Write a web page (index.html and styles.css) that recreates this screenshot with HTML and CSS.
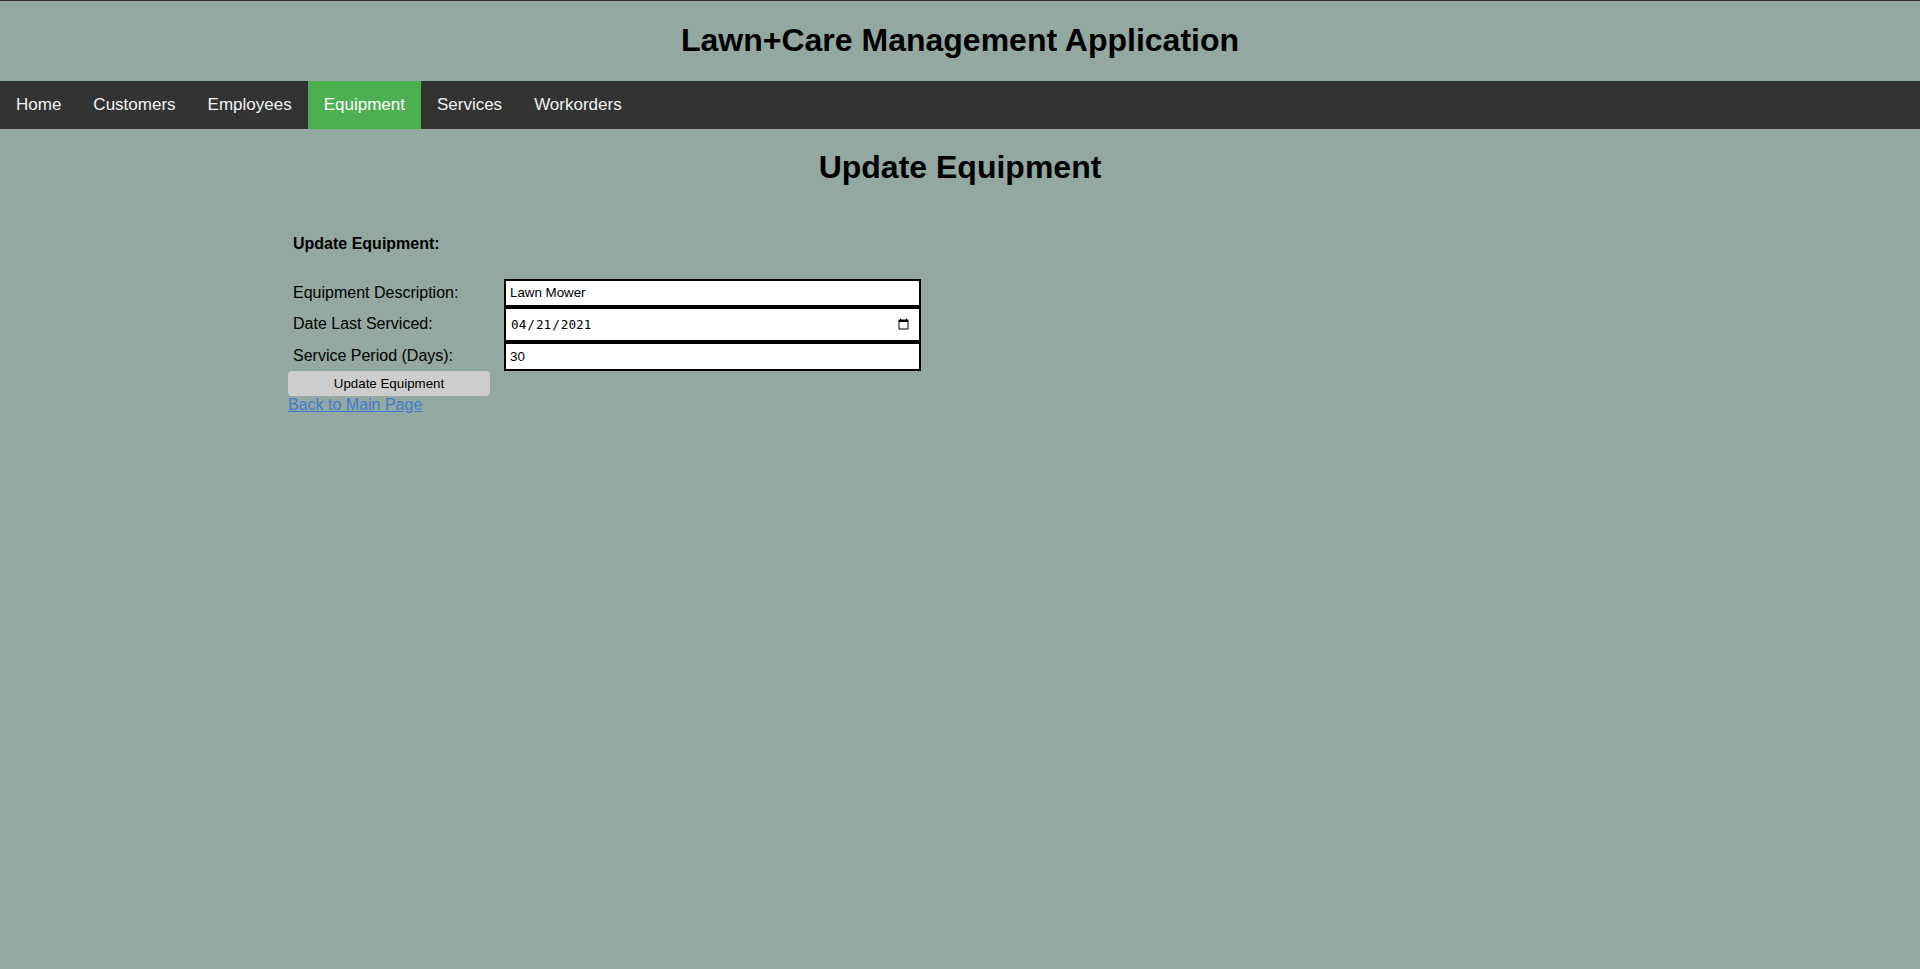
FILE: index.html
```html
<!DOCTYPE html>
<html lang="en">
<head>
<meta charset="utf-8">
<title>Update Equipment</title>
<link rel="stylesheet" href="styles.css">
</head>
<body>
<header class="site-header">
  <h1 class="site-title">Lawn+Care Management Application</h1>
</header>
<nav class="topnav">
  <a class="nav-link" href="#">Home</a>
  <a class="nav-link" href="#">Customers</a>
  <a class="nav-link" href="#">Employees</a>
  <a class="nav-link active" href="#">Equipment</a>
  <a class="nav-link" href="#">Services</a>
  <a class="nav-link" href="#">Workorders</a>
</nav>
<main class="page">
  <h1 class="page-title">Update Equipment</h1>
  <div class="content">
    <form class="equip-form" onsubmit="return false;">
      <p class="form-title">Update Equipment:</p>
      <div class="form-grid">
        <label class="field-label" for="desc">Equipment Description:</label>
        <input class="field field-text" id="desc" type="text" value="Lawn Mower">
        <label class="field-label" for="date">Date Last Serviced:</label>
        <input class="field field-date" id="date" type="date" value="2021-04-21">
        <label class="field-label" for="period">Service Period (Days):</label>
        <input class="field field-number" id="period" type="number" value="30">
      </div>
      <button class="submit-btn" type="submit">Update Equipment</button>
    </form>
    <a class="back-link" href="#">Back to Main Page</a>
  </div>
</main>
</body>
</html>
```

FILE: styles.css
```css
html, body {
  margin: 0;
  padding: 0;
}

body {
  background-color: #93a8a1;
  border-top: 1px solid #2e2e2e;
  font-family: "Liberation Sans", Arial, sans-serif;
  color: #000;
  overflow: hidden;
}

.site-title {
  margin: 21.44px 0;
  font-size: 32px;
  font-weight: bold;
  text-align: center;
}

.topnav {
  display: flex;
  background-color: #333;
  height: 48px;
}

.nav-link {
  display: block;
  color: #f2f2f2;
  text-decoration: none;
  font-size: 17px;
  padding: 14px 16px;
  line-height: 20px;
}

.nav-link.active {
  background-color: #4caf50;
  color: #fff;
}

.page-title {
  margin: 20px 0 21.44px;
  font-size: 32px;
  font-weight: bold;
  text-align: center;
}

.content {
  margin: 0 15%;
}

.form-title {
  margin: 49px 0 26px;
  padding-left: 5px;
  font-size: 16px;
  font-weight: bold;
  line-height: 18px;
}

.form-grid {
  display: grid;
  grid-template-columns: 216px 417px;
  align-items: center;
}

.field-label {
  padding-left: 5px;
  font-size: 16px;
}

.field {
  box-sizing: border-box;
  width: 417px;
  margin: 0;
  padding: 0 4px;
  border: 2px solid #000;
  border-radius: 0;
  background: #fff;
  color: #000;
  font-family: "Liberation Sans", Arial, sans-serif;
  font-size: 13.33px;
  outline: none;
}

.field-text {
  height: 28px;
}

.field-date {
  height: 35px;
  padding-right: 7px;
  font-family: "DejaVu Sans Mono", "Liberation Mono", monospace;
  font-size: 12.7px;
}

.field-number {
  height: 29px;
}

.submit-btn {
  display: block;
  width: 202px;
  height: 25px;
  margin: 0;
  padding: 0;
  border: none;
  border-radius: 4px;
  background-color: #cdcdcd;
  color: #000;
  font-family: "Liberation Sans", Arial, sans-serif;
  font-size: 13.33px;
}

.back-link {
  display: inline-block;
  font-size: 16px;
  color: #3d7ccf;
}
```
